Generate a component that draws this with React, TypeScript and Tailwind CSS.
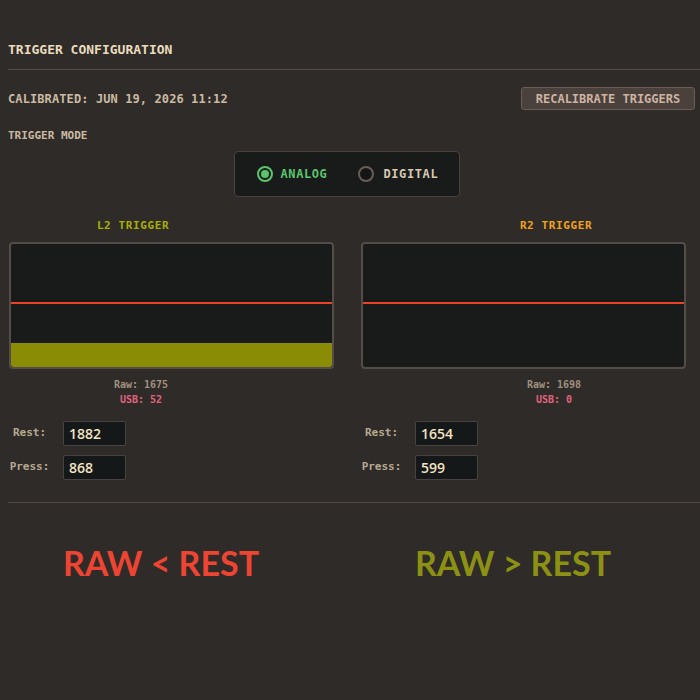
import React from 'react';

type TriggerProps = {
  name: string;
  nameColor: string;
  nameBox: string;
  statBox: string;
  raw: number;
  usb: number;
  rest: number;
  press: number;
  fill: number;
};

function TriggerColumn({ name, nameColor, nameBox, statBox, raw, usb, rest, press, fill }: TriggerProps) {
  return (
    <div className="w-[326px] flex flex-col">
      {/* Trigger title */}
      <div className={`${nameBox} text-center text-[11px] font-bold tracking-[0.6px] leading-[14px] ${nameColor}`}>
        {name}
      </div>

      {/* Meter */}
      <div className="mt-[9px] ml-px w-[325px] h-[127px] border-2 border-[#554b47] rounded-[4px] bg-[#191b1b] relative overflow-hidden flex flex-col justify-end">
        <div className="absolute left-0 right-0 top-[58px] h-[2px] bg-[#e8432a]" />
        {fill > 0 && <div className="bg-[#8b8c05] rounded-b-[2px]" style={{ height: fill }} />}
      </div>

      {/* Readout */}
      <div className={`${statBox} mt-[8px] text-center text-[10px] font-bold leading-[15px]`}>
        <div className="text-[#a0907e]">Raw: {raw}</div>
        <div className="text-[#e0637c]">USB: {usb}</div>
      </div>

      <div className="mt-[14px] flex flex-col gap-[9px]">
        <div className="flex items-center">
          <span className="w-[43px] text-center text-[11px] font-bold text-[#b8a890]">Rest:</span>
          <div className="ml-[12px] w-[63px] h-[25px] bg-[#151818] border border-[#4a4240] rounded-[2px] pl-[5px] flex items-center text-[14px] text-[#f3e3c3] font-['Open_Sans',sans-serif] font-semibold">
            {rest}
          </div>
        </div>
        <div className="flex items-center">
          <span className="w-[43px] text-center text-[11px] font-bold text-[#b8a890]">Press:</span>
          <div className="ml-[12px] w-[63px] h-[25px] bg-[#151818] border border-[#4a4240] rounded-[2px] pl-[5px] flex items-center text-[14px] text-[#f3e3c3] font-['Open_Sans',sans-serif] font-semibold">
            {press}
          </div>
        </div>
      </div>
    </div>
  );
}

export default function App() {
  return (
    <div className="w-[700px] h-[700px] bg-[#2e2b29] font-['DejaVu_Sans_Mono',monospace] overflow-hidden">
      <div className="pl-2 pt-[42px]">
        <h1 className="text-[13px] font-bold leading-[16px] text-[#eadbbd]">TRIGGER CONFIGURATION</h1>
        <div className="mt-[11px] border-t border-[#554a47]" />

        <div className="mt-[17px] pr-[5px] flex items-center justify-between">
          <span className="text-[12px] font-bold tracking-[0.1px] text-[#cbbaa2]">CALIBRATED: JUN 19, 2026 11:12</span>
          <button className="h-[23px] w-[174px] bg-[#4a403c] border border-[#6a5b54] rounded-[3px] text-[12px] font-bold text-[#cdb3a2] flex items-center justify-center">
            RECALIBRATE TRIGGERS
          </button>
        </div>

        <div className="mt-[19px] text-[11px] font-bold text-[#cbbaa2] leading-[14px]">TRIGGER MODE</div>

        {/* Mode selector */}
        <div className="mt-[8px] w-[677px] flex justify-center">
          <div className="w-[226px] h-[46px] bg-[#191b1b] border border-[#4a4240] rounded-[4px] flex items-center pl-[22px]">
            <span className="w-4 h-4 rounded-full border-2 border-[#5cc46e] flex items-center justify-center">
              <span className="w-2 h-2 rounded-full bg-[#5cc46e]" />
            </span>
            <span className="ml-2 text-[12px] font-bold tracking-[0.6px] text-[#5cc46e]">ANALOG</span>
            <span className="ml-[31px] w-4 h-4 rounded-full border-2 border-[#6a5c56] bg-[#141616]" />
            <span className="ml-[9px] text-[12px] font-bold tracking-[0.6px] text-[#d8c8b0]">DIGITAL</span>
          </div>
        </div>

        {/* Triggers */}
        <div className="mt-[22px] flex gap-[26px]">
          <TriggerColumn
            name="L2 TRIGGER"
            nameColor="text-[#a9ae04]"
            nameBox="w-[250px]"
            statBox="ml-[33px] w-[200px]"
            raw={1675}
            usb={52}
            rest={1882}
            press={868}
            fill={24}
          />
          <TriggerColumn
            name="R2 TRIGGER"
            nameColor="text-[#f0a21c]"
            nameBox="ml-[96px] w-[200px]"
            statBox="ml-[94px] w-[200px]"
            raw={1698}
            usb={0}
            rest={1654}
            press={599}
            fill={0}
          />
        </div>

        <div className="mt-[22px] border-t border-[#554a47]" />

        {/* Direction hints */}
        <div className="mt-[40px] flex gap-[26px] font-['Lato',sans-serif] font-bold text-[34px] leading-[40px]">
          <div className="w-[326px] pl-[55px] text-[#ee4432]">RAW &lt; REST</div>
          <div className="w-[326px] pl-[55px] text-[#8d9113]">RAW &gt; REST</div>
        </div>
      </div>
    </div>
  );
}
